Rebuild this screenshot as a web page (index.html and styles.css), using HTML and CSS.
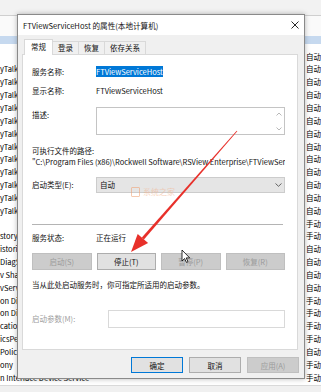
FILE: index.html
```html
<!DOCTYPE html>
<html lang="zh-CN">
<head>
    <meta charset="UTF-8">
    <meta name="viewport" content="width=device-width, initial-scale=1.0">
    <title>FTViewServiceHost 的属性(本地计算机)</title>
    <link rel="stylesheet" href="styles.css">
</head>
<body>
    <!-- services window behind the dialog -->
    <div class="svc">
        <div class="svc-top"></div>
        <div class="svc-head"></div>
        <div class="svc-band"></div>
        <div class="svc-list">
            <div class="svc-row"><span class="svc-name"></span><span class="svc-type">自动(延迟启动)</span></div>
            <div class="svc-row"><span class="svc-name">yTalk</span><span class="svc-type">自动</span></div>
            <div class="svc-row"><span class="svc-name">yTalk</span><span class="svc-type">自动</span></div>
            <div class="svc-row"><span class="svc-name">yTalk</span><span class="svc-type">自动</span></div>
            <div class="svc-row"><span class="svc-name">yTalk</span><span class="svc-type">自动</span></div>
            <div class="svc-row"><span class="svc-name">yTalk</span><span class="svc-type">自动</span></div>
            <div class="svc-row"><span class="svc-name">yTalk</span><span class="svc-type">自动</span></div>
            <div class="svc-row"><span class="svc-name">yTalk</span><span class="svc-type">自动</span></div>
            <div class="svc-row"><span class="svc-name">yTalk</span><span class="svc-type">自动</span></div>
            <div class="svc-row"><span class="svc-name">yTalk</span><span class="svc-type">自动</span></div>
            <div class="svc-row"><span class="svc-name">yTalk</span><span class="svc-type">自动</span></div>
            <div class="svc-row"><span class="svc-name">yTalk</span><span class="svc-type">自动</span></div>
            <div class="svc-row"><span class="svc-name">yTalk</span><span class="svc-type">自动</span></div>
            <div class="svc-row"><span class="svc-name"></span><span class="svc-type">手动</span></div>
            <div class="svc-row"><span class="svc-name">story</span><span class="svc-type">手动(触发器启动)</span></div>
            <div class="svc-row"><span class="svc-name">istori</span><span class="svc-type">自动</span></div>
            <div class="svc-row"><span class="svc-name">DiagS</span><span class="svc-type">自动</span></div>
            <div class="svc-row"><span class="svc-name">v Sha</span><span class="svc-type">自动</span></div>
            <div class="svc-row"><span class="svc-name">vServ</span><span class="svc-type">自动</span></div>
            <div class="svc-row"><span class="svc-name">on Di</span><span class="svc-type">手动</span></div>
            <div class="svc-row"><span class="svc-name">on Di</span><span class="svc-type">手动(触发器启动)</span></div>
            <div class="svc-row"><span class="svc-name">cation</span><span class="svc-type">手动(触发器启动)</span></div>
            <div class="svc-row"><span class="svc-name">icsPe</span><span class="svc-type">手动(触发器启动)</span></div>
            <div class="svc-row"><span class="svc-name">Polic</span><span class="svc-type">自动(延迟启动)</span></div>
            <div class="svc-row"><span class="svc-name">ony</span><span class="svc-type">手动</span></div>
            <div class="svc-row"><span class="svc-name wide">n Interface Device Service</span><span class="svc-type">手动(触发器启动)</span></div>
        </div>
        <div class="svc-foot"></div>
    </div>

    <!-- properties dialog -->
    <div class="dialog">
        <div class="titlebar">
            <span>FTViewServiceHost 的属性(本地计算机)</span>
            <svg class="close" width="8" height="8" viewBox="0 0 8 8"><path d="M0.5 0.5L7.5 7.5M7.5 0.5L0.5 7.5" stroke="#111" stroke-width="0.9"/></svg>
        </div>
        <div class="dlg-body">
            <div class="tabs">
                <div class="tab active">常规</div>
                <div class="tab">登录</div>
                <div class="tab">恢复</div>
                <div class="tab">依存关系</div>
            </div>
            <div class="panel">
                <div class="field">
                    <span class="label">服务名称:</span>
                    <span><span class="selected">FTViewServiceHost</span></span>
                </div>
                <div class="field gap7">
                    <span class="label">显示名称:</span>
                    <span>FTViewServiceHost</span>
                </div>
                <div class="field gap10">
                    <span class="label desc-label">描述:</span>
                    <div class="desc-box">
                        <div class="scroll">
                            <svg width="6" height="4" viewBox="0 0 6 4"><path d="M0.5 3.5L3 1L5.5 3.5" fill="none" stroke="#a6a6a6" stroke-width="0.8"/></svg>
                            <svg width="6" height="4" viewBox="0 0 6 4"><path d="M0.5 0.5L3 3L5.5 0.5" fill="none" stroke="#a6a6a6" stroke-width="0.8"/></svg>
                        </div>
                    </div>
                </div>
                <div class="plain gap10">可执行文件的路径:</div>
                <div class="plain path">"C:\Program Files (x86)\Rockwell Software\RSView Enterprise\FTViewSer</div>
                <div class="field gap10">
                    <span class="label combo-label">启动类型(E):</span>
                    <div class="combo">
                        <span>自动</span>
                        <svg width="7" height="4" viewBox="0 0 7 4"><path d="M0.5 0.5L3.5 3.3L6.5 0.5" fill="none" stroke="#444" stroke-width="0.8"/></svg>
                    </div>
                </div>
                <div class="separator"></div>
                <div class="field gap7">
                    <span class="label">服务状态:</span>
                    <span>正在运行</span>
                </div>
                <div class="btn-row">
                    <button class="btn" disabled>启动(S)</button>
                    <button class="btn">停止(T)</button>
                    <button class="btn" disabled>暂停(P)</button>
                    <button class="btn" disabled>恢复(R)</button>
                </div>
                <div class="plain hint">当从此处启动服务时，你可指定所适用的启动参数。</div>
                <div class="field params">
                    <span class="label param-label">启动参数(M):</span>
                    <div class="param-input"></div>
                </div>
            </div>
            <div class="footer">
                <button class="btn default">确定</button>
                <button class="btn">取消</button>
                <button class="btn" disabled>应用(A)</button>
            </div>
        </div>
    </div>

    <div class="watermark">
        <span class="wm-logo"></span>
        <span>系统之家</span>
    </div>

    <!-- red annotation arrow and mouse pointer -->
    <svg class="overlay" width="321" height="392" viewBox="0 0 321 392">
        <polygon points="237.3,131.3 236.7,130.7 141.85,237.57 143.95,239.43" fill="#e8302a"/>
        <polygon points="131,252 137.7,233.9 148.1,243.1" fill="#e8302a"/>
        <path d="M182 250 L182 261 L184.6 258.5 L186.4 262.4 L188 261.7 L186.2 257.9 L189.7 257.9 Z" fill="#fff" stroke="#000" stroke-width="0.8" stroke-linejoin="round"/>
    </svg>
</body>
</html>
```

FILE: styles.css
```css
body {
    margin: 0;
    width: 321px;
    height: 392px;
    overflow: hidden;
    position: relative;
    font-family: "Noto Sans CJK SC", "Noto Sans", sans-serif;
    font-size: 7.5px;
    color: #111;
    background-color: #fff;
}

/* services window */
.svc {
    height: 392px;
    display: flex;
    flex-direction: column;
}
.svc-top {
    height: 15px;
    background-color: #f2f2f2;
    border-bottom: 1px solid #cfcfcf;
}
.svc-head {
    height: 20px;
    background-color: #fafafa;
}
.svc-band {
    height: 8px;
    background-color: #c6d9ef;
}
.svc-list {
    padding-top: 6.6px;
}
.svc-row {
    display: grid;
    grid-template-columns: 305px 16px;
    height: 12.85px;
    line-height: 12.85px;
    white-space: nowrap;
    overflow: hidden;
    color: #000;
}
.svc-name {
    max-width: 17px;
    overflow: hidden;
}
.svc-name.wide {
    max-width: none;
}
.svc-type {
    padding-left: 1px;
    overflow: hidden;
}
.svc-foot {
    flex: 1;
    background-color: #f0f0f0;
    border-top: 1px solid #d9d9d9;
}

/* dialog */
.dialog {
    position: absolute;
    left: 17px;
    top: 14px;
    width: 288px;
    height: 365px;
    box-sizing: border-box;
    border: 1px solid #8a8a8a;
    background-color: #f0f0f0;
    box-shadow: 0 0 5px rgba(0, 0, 0, 0.28);
    display: flex;
    flex-direction: column;
}
.titlebar {
    height: 20px;
    flex-shrink: 0;
    background-color: #fff;
    display: flex;
    align-items: center;
    justify-content: space-between;
    padding: 0 5px 0 5px;
    font-size: 7.6px;
}
.dlg-body {
    flex: 1;
    display: flex;
    flex-direction: column;
    padding: 0 6px 0 4px;
}
.tabs {
    height: 19px;
    display: flex;
    align-items: flex-end;
    padding-left: 2px;
}
.tab {
    height: 12px;
    line-height: 12px;
    padding: 0 5px;
    border: 1px solid #d9d9d9;
    border-bottom: none;
    margin-left: -1px;
    background-color: #f0f0f0;
}
.tab.active {
    height: 15px;
    line-height: 14px;
    padding: 0 6px;
    margin-left: 0;
    margin-bottom: -1px;
    background-color: #fff;
    position: relative;
    z-index: 1;
}
.panel {
    height: 296px;
    box-sizing: border-box;
    background-color: #fff;
    border: 1px solid #d9d9d9;
    padding: 11px 12px 0 9px;
}
.field {
    display: flex;
    line-height: 12px;
}
.label {
    width: 64px;
    flex-shrink: 0;
}
.gap7 {
    margin-top: 7px;
}
.gap10 {
    margin-top: 10px;
}
.selected {
    display: inline-block;
    line-height: 11px;
    background-color: #0078d7;
    color: #fff;
}
.desc-label {
    padding-top: 2px;
}
.desc-box {
    flex: 1;
    height: 28px;
    box-sizing: border-box;
    border: 1px solid #c4c4c4;
    display: flex;
    justify-content: flex-end;
}
.scroll {
    width: 10px;
    display: flex;
    flex-direction: column;
    justify-content: space-between;
    align-items: center;
    padding: 4px 0 3px;
}
.scroll svg {
    display: block;
}
.plain {
    line-height: 11px;
    white-space: nowrap;
}
.path {
    overflow: hidden;
    width: 253px;
}
.combo-label {
    line-height: 16px;
}
.combo {
    flex: 1;
    height: 16px;
    box-sizing: border-box;
    border: 1px solid #cccccc;
    background-color: #e5e5e5;
    display: flex;
    align-items: center;
    justify-content: space-between;
    padding: 0 2px 0 3px;
    line-height: 14px;
}
.separator {
    margin: 31px 2px 0 0;
    height: 1px;
    background-color: #b4b4b4;
}
.btn-row {
    margin-top: 9px;
    display: grid;
    grid-template-columns: repeat(4, 1fr);
    gap: 5px;
}
.btn {
    font-family: inherit;
    font-size: 7.5px;
    height: 17px;
    padding: 0;
    border: 1px solid #adadad;
    background-color: #e1e1e1;
    color: #111;
}
.btn:disabled {
    background-color: #cccccc;
    border-color: #bfbfbf;
    color: #9b9b9b;
}
.hint {
    margin-top: 9px;
    line-height: 12px;
}
.params {
    margin-top: 19px;
}
.param-label {
    width: 76px;
    line-height: 18px;
    color: #a0a0a0;
}
.param-input {
    flex: 1;
    height: 18px;
    box-sizing: border-box;
    border: 1px solid #d9d9d9;
}
.footer {
    display: flex;
    justify-content: flex-end;
    gap: 6px;
    padding: 7px 0 0;
    margin-right: -1px;
}
.footer .btn {
    width: 52px;
    height: 16px;
}
.footer .btn.default {
    border-color: #0078d7;
}

/* watermark over the combo box */
.watermark {
    position: absolute;
    left: 131px;
    top: 186px;
    display: flex;
    align-items: center;
    gap: 3px;
    color: #f3b48e;
    opacity: 0.55;
    font-size: 8px;
}
.wm-logo {
    width: 7px;
    height: 8px;
    border: 1px solid #f0a070;
    border-radius: 1px;
}

.overlay {
    position: absolute;
    left: 0;
    top: 0;
    pointer-events: none;
}
```
